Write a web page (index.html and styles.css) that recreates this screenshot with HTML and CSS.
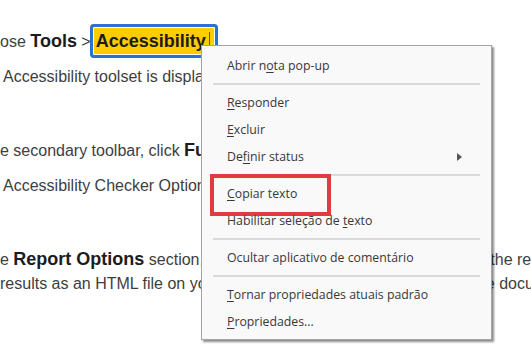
FILE: index.html
```html
<!DOCTYPE html>
<html lang="en">
<head>
	<meta charset="UTF-8">
	<title>Context menu</title>
	<link rel="stylesheet" href="styles.css">
</head>
<body>
	<div class="doc">
		<div class="step">
			<p class="instr">ose <b>Tools</b> &gt;<span class="hilite">Accessibility</span></p>
			<p class="result indent">Accessibility toolset is displayed in the secondary toolbar.</p>
		</div>
		<div class="step">
			<p class="instr">e secondary toolbar, click <b>Full Check</b>.</p>
			<p class="result indent">Accessibility Checker Options dialog box is displayed.</p>
		</div>
		<div class="step last">
			<p class="instr">e <b>Report Options</b> section, select options for how you want to view the results. You can save the</p>
			<p class="instr">results as an HTML file on your system, or attach the results file to the document.</p>
		</div>
		<div class="step">
			<p class="instr indent">Select the checking options that you would like to check for the report.</p>
		</div>
	</div>

	<div class="menu">
		<div class="item">Abrir n<u>o</u>ta pop-up</div>
		<div class="sep"></div>
		<div class="item"><u>R</u>esponder</div>
		<div class="item"><u>E</u>xcluir</div>
		<div class="item sub">De<u>f</u>inir status</div>
		<div class="sep"></div>
		<div class="item marked"><u>C</u>opiar texto</div>
		<div class="item">Habilitar seleção de <u>t</u>exto</div>
		<div class="sep"></div>
		<div class="item">Ocultar aplicativo de comentário</div>
		<div class="sep"></div>
		<div class="item"><u>T</u>ornar propriedades atuais padrão</div>
		<div class="item"><u>P</u>ropriedades...</div>
	</div>
</body>
</html>
```

FILE: styles.css
```css
*{
	margin: 0;
	padding: 0;
	box-sizing: border-box;
}
html,body{
	width: 531px;
	height: 347px;
	overflow: hidden;
	background: #fff;
}
body{
	position: relative;
	font-family: "Liberation Sans", Arial, sans-serif;
	font-size: 16px;
	color: #3e3e3e;
}

/* document behind the menu */
.doc{
	padding-top: 29px;
}
.step{
	margin-bottom: 49px;
}
.step.last{
	margin-bottom: 48px;
}
.step p{
	line-height: 24px;
	white-space: nowrap;
}
.step .result{
	margin-top: 11px;
}
.indent{
	padding-left: 3px;
}
.step b{
	font-size: 18px;
	color: #1c1c1c;
}
.hilite{
	font-weight: bold;
	font-size: 18px;
	color: #1c1c1c;
	background: #ffcc00;
	border: 3px solid #2a72d0;
	border-radius: 4px;
	box-shadow: inset 0 0 0 1px #fff;
	padding: 4px 5px 4px 3px;
	margin-left: -1px;
}
.hilite::after{
	content: "";
	display: inline-block;
	width: 1px;
	height: 18px;
	margin-left: 3px;
	vertical-align: -3px;
	background: #555;
}

/* context menu */
.menu{
	position: absolute;
	left: 201px;
	top: 45px;
	width: 291px;
	height: 295px;
	padding: 6px 0 4px 0;
	background: #f9f9f9;
	border: 1px solid #a3a3a3;
	box-shadow: 2px 2px 2px rgba(0,0,0,0.45);
	font-family: "Open Sans", "Noto Sans", sans-serif;
	font-size: 12.3px;
	color: #383838;
}
.menu .item{
	position: relative;
	height: 27px;
	line-height: 27px;
	padding-left: 25px;
	white-space: nowrap;
}
.menu .item u{
	text-underline-offset: 2px;
}
.menu .sep{
	height: 10px;
	margin: 0 11px;
	position: relative;
}
.menu .sep::before{
	content: "";
	position: absolute;
	left: 0;
	right: 0;
	top: 4px;
	height: 2px;
	background: #dadada;
}
.menu .sub::after{
	content: "";
	position: absolute;
	left: 255px;
	top: 10px;
	border-left: 5px solid #555;
	border-top: 4px solid transparent;
	border-bottom: 4px solid transparent;
}
.menu .marked::before{
	content: "";
	position: absolute;
	left: 8px;
	top: -6px;
	width: 113px;
	height: 34px;
	border: 4px solid #e23b3d;
}
```
